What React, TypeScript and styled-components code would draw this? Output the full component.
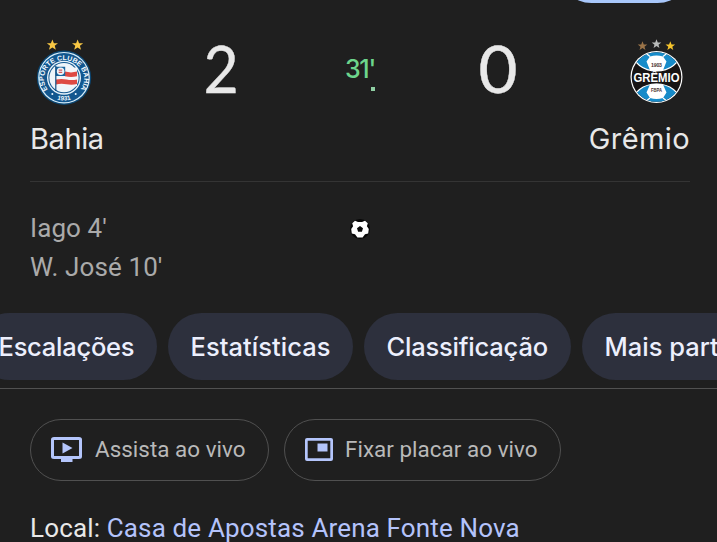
import React from "react";
import styled, { createGlobalStyle } from "styled-components";

const GlobalStyle = createGlobalStyle`
  * { box-sizing: border-box; }
  html, body { margin: 0; padding: 0; background: #1f1f1f; overflow: hidden; }
`;

const numerals = `Lato, "Open Sans", sans-serif`;
const display = `Inter, "Open Sans", sans-serif`;
const body = `Roboto, "Liberation Sans", sans-serif`;

const Page = styled.main`
  display: flex;
  flex-direction: column;
  width: 717px;
  height: 542px;
  overflow: hidden;
  background: #1f1f1f;
  color: #e8e8e8;
  font-family: ${body};

  > * { flex-shrink: 0; }
`;

const TopStrip = styled.div`
  display: flex;
  justify-content: flex-end;
  align-items: flex-end;
  height: 3px;
  padding-right: 26px;
  overflow: hidden;
`;

const ActiveButton = styled.div`
  flex: none;
  width: 133px;
  height: 67px;
  border-radius: 34px;
  background: #a8c7fa;
`;

const Scoreboard = styled.section`
  display: flex;
  justify-content: space-between;
  height: 109px;
  padding: 33px 27px 0;
`;

const Result = styled.div`
  display: grid;
  grid-template-columns: repeat(3, 138.5px);
  margin-left: 3px;
`;

const Crest = styled.svg`
  display: block;
  width: 68px;
  height: 74px;
`;

const Score = styled.div`
  text-align: center;
  font: 400 66px/63px ${numerals};
`;

const Digit = styled.span<{ $scale: number }>`
  display: inline-block;
  transform: scaleX(${(p) => p.$scale});
  -webkit-text-stroke: 0.4px currentColor;
`;

const Clock = styled.div`
  display: flex;
  flex-direction: column;
  align-items: center;
  padding-top: 17px;
  color: #6dd58c;
  font: 500 25px/32px ${display};
  letter-spacing: -1.3px;
`;

const Tick = styled.span`
  width: 4px;
  height: 4px;
  margin: 2px 0 0 26px;
  background: #8fcfa3;
`;

const Names = styled.div`
  display: flex;
  justify-content: space-between;
  height: 70px;
  margin: 0 27px 0 30px;
  padding-top: 8px;
  font: 400 29px/38px ${display};
`;

const Name = styled.span<{ $spacing: number }>`
  letter-spacing: ${(p) => p.$spacing}px;
`;

const Scorers = styled.section`
  display: grid;
  grid-template-columns: 1fr 22px 1fr;
  height: 132px;
  margin: -1px 27px 0 30px;
  padding-top: 27px;
  border-top: 1px solid #343434;
`;

const ScorerList = styled.ul`
  margin: 0;
  padding: 0;
  list-style: none;
  color: #aaaaaa;
  font-size: 26px;
  line-height: 39px;
  letter-spacing: 0.1px;
`;

const Ball = styled.svg`
  width: 22px;
  height: 22px;
  margin: 9px 0 0 0;
`;

const Tabs = styled.nav`
  display: flex;
  gap: 11px;
  height: 76px;
  overflow: hidden;
  border-bottom: 1px solid #515151;
`;

const Tab = styled.div<{ $width: number; $spacing: number; $offset?: number }>`
  display: flex;
  flex: none;
  align-items: center;
  padding-left: 22.5px;
  width: ${(p) => p.$width}px;
  height: 67px;
  margin-left: ${(p) => p.$offset ?? 0}px;
  border-radius: 34px;
  background: #2d303d;
  color: #eceffd;
  font: 500 25.5px/34px ${display};
  letter-spacing: ${(p) => p.$spacing}px;
  white-space: nowrap;
`;

const Actions = styled.div`
  display: flex;
  gap: 15px;
  padding: 30px 30px 0;
`;

const Action = styled.button<{ $width: number }>`
  display: flex;
  align-items: center;
  width: ${(p) => p.$width}px;
  height: 62px;
  padding: 0 0 3px 20px;
  gap: 12px;
  border: 1px solid #505050;
  border-radius: 31px;
  background: transparent;
  color: #b9b9b9;
  font: 400 22.4px/30px ${body};
  letter-spacing: 0.04px;
  white-space: nowrap;
`;

const ActionIcon = styled.svg<{ $width: number }>`
  flex: none;
  width: ${(p) => p.$width}px;
  height: 32px;
  margin-top: 3px;
`;

const Venue = styled.p`
  margin: 31px 0 0 30px;
  font-size: 26px;
  line-height: 32px;
  letter-spacing: 0.15px;
  white-space: nowrap;
`;

const VenueLink = styled.span`
  color: #b4c3fb;
`;

const STAR = "M0-6 1.6-1.9 6-1.8 2.5.9 3.7 5.1 0 2.6-3.7 5.1-2.5.9-6-1.8-1.6-1.9Z";

function BahiaCrest() {
  return (
    <Crest viewBox="27 36 68 74" role="img" aria-label="Bahia">
      <defs>
        <path id="bahia-top" d="M47.8 89.5A20 18.5 0 1 1 80.2 89.5" />
        <path id="bahia-bottom" d="M50 95.7A23 23 0 0 0 78 95.7" />
      </defs>
      <path d={STAR} fill="#f8c744" transform="translate(52.4 45) scale(.93)" />
      <path d={STAR} fill="#f8c744" transform="translate(77.6 45) scale(.93)" />
      <circle cx="64" cy="77.7" r="27.2" fill="#0b4672" />
      <circle cx="64" cy="77.7" r="25.8" fill="#d6edfa" />
      <circle cx="64" cy="77.7" r="24.6" fill="#12578f" />
      <circle cx="64" cy="77.7" r="17" fill="#e7f3fb" />
      <circle cx="64" cy="77.7" r="15.6" fill="#12578f" />
      <circle cx="64" cy="77.7" r="14.6" fill="#eef5fa" />
      <path d="M55.7 67.2q5.5-1.800 11 0t10.3-.2V86q-5 1.800-10.3 0t-11 .3Z" fill="#f4f6f9" />
      <path d="M65 71.6q6 1.600 12 0v4.600q-6 1.600-12 0ZM56 79.5q5.500-1.200 10.500 0t10.500 0v4.600q-5 1.200-10.500.2t-10.500.2Z" fill="#de4a43" />
      <path d="M55.7 66.700h9.500v9.300h-9.500Z" fill="#19649d" />
      <circle cx="60.6" cy="71.3" r="3.8" fill="#eef5fa" />
      <path d="M58.7 70.200h3.500M58.700 72.400h3.500" stroke="#d65a5b" strokeWidth="1.3" />
      <path d="M55.8 66v25" stroke="#124f82" strokeWidth="1.2" />
      <text fill="#f4faff" fontFamily="Liberation Sans, sans-serif" fontWeight="700" fontSize="7">
        <textPath href="#bahia-top" textLength="83" lengthAdjust="spacing">ESPORTE CLUBE BAHIA</textPath>
      </text>
      <text fill="#f4faff" fontFamily="Liberation Sans, sans-serif" fontWeight="700" fontSize="6.3" textAnchor="middle">
        <textPath href="#bahia-bottom" startOffset="50%">1931</textPath>
      </text>
      <circle cx="52.3" cy="94" r="1" fill="#eef8ff" />
      <circle cx="75.7" cy="94" r="1" fill="#eef8ff" />
    </Crest>
  );
}

function GremioCrest() {
  return (
    <Crest viewBox="622 36 68 74" role="img" aria-label="Grêmio">
      <defs>
        <clipPath id="gremio-disc"><circle cx="656.5" cy="77" r="24.8" /></clipPath>
      </defs>
      <path d={STAR} fill="#9b7448" transform="translate(642.5 46) scale(.8)" />
      <path d={STAR} fill="#b9bbba" transform="translate(656.5 44) scale(.8)" />
      <path d={STAR} fill="#f6c42c" transform="translate(670.3 46) scale(.8)" />
      <circle cx="656.5" cy="77" r="26" fill="#fff" />
      <g clipPath="url(#gremio-disc)">
        <rect x="630" y="50" width="54" height="54" fill="#171414" />
        <g stroke="#fff" strokeWidth="1.2">
          <ellipse cx="656.5" cy="52" rx="24" ry="19" fill="#168bc9" />
          <ellipse cx="656.5" cy="102.5" rx="24" ry="18.5" fill="#168bc9" />
        </g>
        <path d="M650 56.5q6.500-2 13 0l3.500 5-3.500 8.800q-6.500 1.400-13 0L646.500 61.500ZM650 98q6.500 2 13 0l3.500-5.500-3.500-8q-6.500-1.400-13 0L646.500 92.500Z" fill="#fff" />
        <path d="M650 56.5l-5-4M663 56.500l5-4M650 98l-5 4M663 98l5 4" stroke="#fff" strokeWidth="1.2" />
      </g>
      <g textAnchor="middle" fontFamily="Liberation Sans, sans-serif" fontWeight="700">
        <text x="656.5" y="82" fill="#fff" fontSize="12.8" textLength="46" lengthAdjust="spacingAndGlyphs">GRÊMIO</text>
        <text x="656.5" y="66.5" fill="#49302e" fontSize="5.2" textLength="11">1903</text>
        <text x="656.5" y="92.3" fill="#49302e" fontSize="4.9" textLength="11" lengthAdjust="spacingAndGlyphs">FBPA</text>
      </g>
    </Crest>
  );
}

function GoalIcon() {
  return (
    <Ball viewBox="0 0 22 22">
      <circle cx="11" cy="11" r="10" fill="#080808" />
      <g fill="#fff" transform="translate(11 11)">
        <path fillRule="evenodd" d="M-5-8.200-2-7H2L5-8.200 7.800-5.800 6.900-2.700 8.800 0 8.200 4.600 5 5.200 2.600 8.600H-2.600L-5 5.200-8.200 4.600-8.800 0-6.900-2.700-7.800-5.800ZM0-3-3-.7-1.900 2.800H1.900L3-.7Z" />
      </g>
    </Ball>
  );
}

function WatchIcon() {
  return (
    <ActionIcon $width={32} viewBox="0 0 32 32" fill="#b4c5fb">
      <path fillRule="evenodd" d="M3 3H28Q31 3 31 5.500V22.500Q31 25 28 25H21.500V28H10V25H3Q0 25 0 22.500V5.500Q0 3 3 3ZM3 6V22H28V6Z" />
      <path d="m11.5 8.500 10 5.500-10 5.500Z" />
    </ActionIcon>
  );
}

function PinIcon() {
  return (
    <ActionIcon $width={28} viewBox="0 0 28 32" fill="#b4c5fb">
      <path fillRule="evenodd" d="M2 4H26Q28 4 28 6V25Q28 27 26 27H2Q0 27 0 25V6Q0 4 2 4ZM2.700 6.700V24.300H25.300V6.700Z" />
      <path d="M12.5 9.500h10v8h-10Z" />
    </ActionIcon>
  );
}

export default function App() {
  return (
    <Page>
      <GlobalStyle />
      <TopStrip><ActiveButton /></TopStrip>
      <Scoreboard>
        <BahiaCrest />
        <Result>
          <Score><Digit $scale={0.92}>2</Digit></Score>
          <Clock><span>31'</span><Tick /></Clock>
          <Score><Digit $scale={1.02}>0</Digit></Score>
        </Result>
        <GremioCrest />
      </Scoreboard>
      <Names>
        <Name $spacing={-0.4}>Bahia</Name>
        <Name $spacing={0.4}>Grêmio</Name>
      </Names>
      <Scorers>
        <ScorerList><li>Iago 4'</li><li>W. José 10'</li></ScorerList>
        <GoalIcon />
      </Scorers>
      <Tabs>
        <Tab $width={181} $spacing={-0.25} $offset={-24}>Escalações</Tab>
        <Tab $width={185} $spacing={0.05}>Estatísticas</Tab>
        <Tab $width={207} $spacing={-0.2}>Classificação</Tab>
        <Tab $width={211} $spacing={0}>Mais partidas</Tab>
      </Tabs>
      <Actions>
        <Action $width={239}><WatchIcon />Assista ao vivo</Action>
        <Action $width={277}><PinIcon />Fixar placar ao vivo</Action>
      </Actions>
      <Venue>Local: <VenueLink>Casa de Apostas Arena Fonte Nova</VenueLink></Venue>
    </Page>
  );
}
